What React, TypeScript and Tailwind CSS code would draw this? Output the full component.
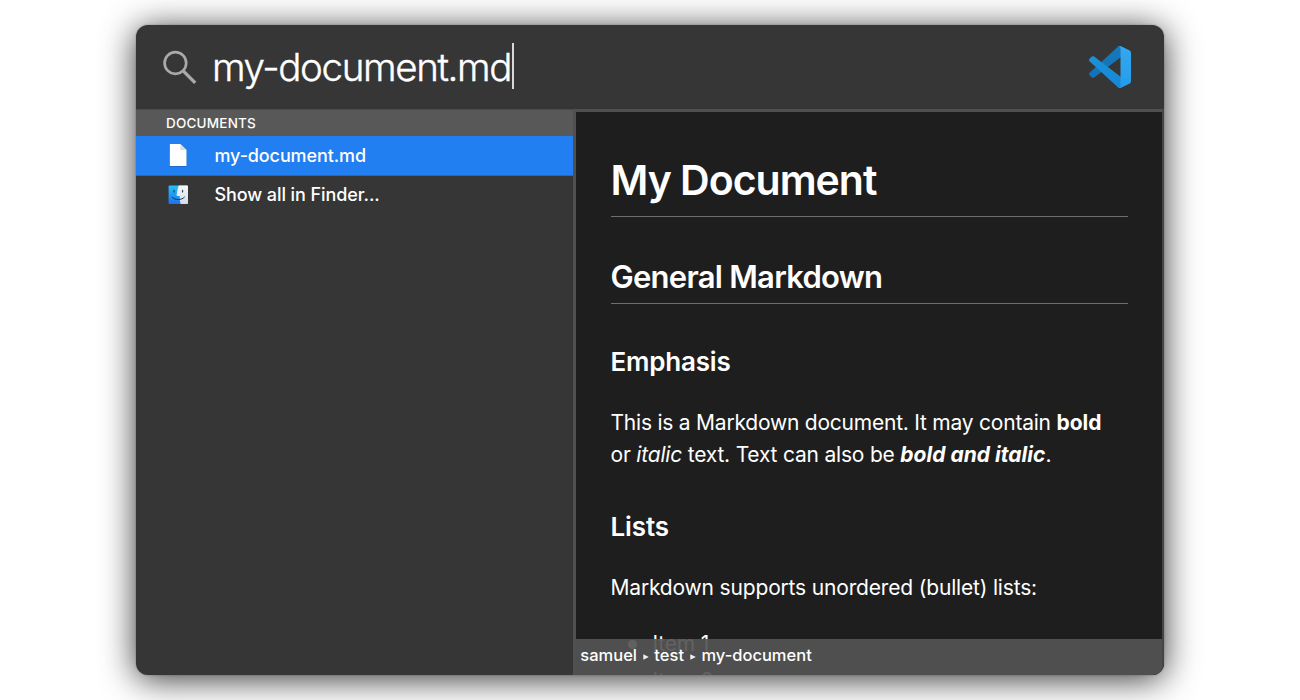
import React from "react";

function SearchIcon() {
  return (
    <svg className="block h-[36px] w-[36px] shrink-0" viewBox="0 0 36 36" fill="none" stroke="#a9a9a9">
      <circle cx="12.4" cy="14" r="10.8" strokeWidth="2.7" />
      <path d="M20.2 21.8 L32.2 33.8" strokeWidth="3.3" />
    </svg>
  );
}

function CodeLogo() {
  return (
    <svg className="block h-[42px] w-[42px] shrink-0" viewBox="0 0 100 100">
      <defs>
        <linearGradient id="armBack" x1="0" y1="1" x2="1" y2="0">
          <stop offset="0" stopColor="#1272b4" />
          <stop offset="1" stopColor="#1779bb" />
        </linearGradient>
        <linearGradient id="armFront" x1="0" y1="0" x2="1" y2="1">
          <stop offset="0" stopColor="#1b93d8" />
          <stop offset="1" stopColor="#1685d6" />
        </linearGradient>
        <linearGradient id="spine" x1="0" y1="0" x2="0" y2="1">
          <stop offset="0" stopColor="#35a8f0" />
          <stop offset="1" stopColor="#259bea" />
        </linearGradient>
      </defs>
      <path fill="url(#armBack)" d="M96.46 10.8L75.86.88C73.47-.27 70.62.21 68.75 2.08L1.3 63.58c-1.82 1.66-1.82 4.51 0 6.16l5.51 5.01c1.49 1.35 3.72 1.45 5.32.24L93.36 13.37C96.09 11.3 100 13.25 100 16.67v-.24c0-2.4-1.38-4.59-3.54-5.63Z" />
      <path fill="url(#armFront)" d="M96.46 89.2l-20.6 9.92c-2.39 1.15-5.24.67-7.11-1.2L1.3 36.42c-1.82-1.66-1.82-4.51 0-6.17l5.51-5c1.49-1.35 3.72-1.45 5.32-.24L93.36 86.63C96.09 88.7 100 86.75 100 83.33v.24c0 2.4-1.38 4.59-3.54 5.63Z" />
      <path fill="url(#spine)" d="M75.86 99.13c-2.39 1.14-5.24.66-7.11-1.21C71.06 100.22 75 98.59 75 95.33V4.67c0-3.26-3.94-4.89-6.25-2.59 1.87-1.87 4.72-2.36 7.11-1.21l20.6 9.91c2.16 1.04 3.54 3.23 3.54 5.63v67.18c0 2.4-1.38 4.59-3.54 5.63l-20.6 9.91Z" />
    </svg>
  );
}

function DocIcon() {
  return (
    <svg className="block h-[24px] w-[20px] -translate-y-px" viewBox="0 0 20 24">
      <path d="M1.4 1.2H12.3L18.8 7.6V23.8H1.4Z" fill="#14539f" opacity=".55" />
      <path d="M1.8 .9H12.3L18.5 7V23.1H1.8Z" fill="#fff" />
      <path d="M12.3 .9V7H18.5Z" fill="#d9dde3" />
    </svg>
  );
}

function FinderIcon() {
  return (
    <svg className="block h-[20px] w-[20px]" viewBox="0 0 20 20">
      <defs>
        <linearGradient id="faceLeft" x1="0" y1="0" x2="0" y2="1">
          <stop offset="0" stopColor="#25c3fb" />
          <stop offset="1" stopColor="#1d72ea" />
        </linearGradient>
        <linearGradient id="faceRight" x1="0" y1="0" x2="0" y2="1">
          <stop offset="0" stopColor="#f7f8fa" />
          <stop offset="1" stopColor="#d5dde8" />
        </linearGradient>
      </defs>
      <rect x=".6" y=".4" width="19.4" height="18.6" rx="1" fill="url(#faceLeft)" />
      <path d="M10.8 .4C9.4 4 8.7 7.4 8.7 11H11.7C11.6 14 12 17 12.6 19H19a1 1 0 0 0 1-1V1.4a1 1 0 0 0-1-1Z" fill="url(#faceRight)" />
      <path d="M6 5.4V7M14.6 5.4V7" stroke="#1c3550" strokeWidth="1.1" strokeLinecap="round" />
      <path d="M4.2 12.2C7.2 15.4 13.4 15.4 16.4 12.2" stroke="#1c3550" strokeWidth="1" fill="none" strokeLinecap="round" />
    </svg>
  );
}

function Arrow() {
  return (
    <svg className="mx-[5.7px] block h-[6px] w-[6px] translate-y-px" viewBox="0 0 6 6">
      <path d="M.3 .2L5.8 3 .3 5.8Z" fill="#f0f0f0" />
    </svg>
  );
}

export default function App() {
  return (
    <div className="flex h-[700px] w-[1300px] justify-center overflow-hidden bg-white pt-[25px] font-['Inter',sans-serif] text-white antialiased">
      <div className="flex h-[650px] w-[1028px] flex-col overflow-hidden rounded-[12px] bg-[#363636] whitespace-nowrap shadow-[0_0_2px_rgba(0,0,0,0.3),0_4px_34px_rgba(0,0,0,0.8)]">
        <header className="flex h-[84px] shrink-0 items-center pr-[33px] pl-[27px]">
          <SearchIcon />
          <span className="ml-[13px] text-[38.5px] leading-[46px] font-[350] tracking-[-1.36px] [-webkit-text-stroke:0.4px_#fff]">my-document.md</span>
          <span className="ml-[1px] h-[46px] w-[2px] -translate-y-[1px] bg-[#d8d8d8]" />
          <span className="ml-auto">
            <CodeLogo />
          </span>
        </header>

        <div className="flex min-h-0 flex-1">
          <aside className="w-[437px] shrink-0">
            <div className="flex h-[27px] items-center border-t border-[#4a4a4a] bg-[#585858] pt-px pl-[30px] text-[13.5px] font-medium tracking-[0.2px]">
              DOCUMENTS
            </div>
            <div className="flex h-[40px] items-center border-b border-[#55606e] bg-[#217ff1] pl-[32px] text-[18px] font-medium tracking-[-0.11px]">
              <DocIcon />
              <span className="ml-[26.5px]">my-document.md</span>
            </div>
            <div className="flex h-[37px] items-center pl-[32px] text-[18px] font-medium tracking-[-0.08px]">
              <FinderIcon />
              <span className="ml-[26.5px]">Show all in Finder...</span>
            </div>
          </aside>

          <main className="relative min-w-0 flex-1 overflow-hidden border-t-[3px] border-r-[2px] border-l-[3px] border-t-[#505050] border-r-[#454545] border-l-[#505050] bg-[#1e1e1e]">
            <article className="w-[552px] pl-[34.5px] text-[21px] leading-[32px] tracking-[-0.17px]">
              <h1 className="mt-[41px] h-[64px] w-[517px] border-b border-[#6e6e6e] text-[41px] leading-[54px] font-semibold tracking-[-1px]">My Document</h1>
              <h2 className="mt-[39px] h-[48px] w-[517px] border-b border-[#6e6e6e] text-[31px] leading-[42px] font-semibold tracking-[-0.73px]">General Markdown</h2>
              <h3 className="mt-[42px] text-[26px] leading-[32px] font-semibold tracking-[-0.2px]">Emphasis</h3>
              <p className="mt-[29px]">
                <span className="tracking-[-0.22px]">This is a Markdown document. It may contain <b className="tracking-[-0.05px]">bold</b></span>
                <br />
                <span className="tracking-[-0.2px]">or <i>italic</i> text. Text can also be <b className="tracking-[0.02px]"><i>bold and italic</i></b>.</span>
              </p>
              <h3 className="mt-[40px] text-[26px] leading-[32px] font-semibold tracking-[-0.1px]">Lists</h3>
              <p className="mt-[29px]">Markdown supports unordered (bullet) lists:</p>
              <ul className="mt-[24px] flex flex-col gap-[5px] pl-[17px]">
                <li className="flex items-center">
                  <span className="mr-[16px] h-[9px] w-[9px] rounded-full bg-white" />
                  Item 1
                </li>
                <li className="flex items-center">
                  <span className="mr-[16px] h-[9px] w-[9px] rounded-full bg-white" />
                  Item 2
                </li>
              </ul>
            </article>
            <footer className="absolute -right-[2px] bottom-0 left-0 flex h-[36px] items-center bg-[#545454]/92 pb-[3px] pl-[4.3px] text-[16.5px] font-medium">
              <span>samuel</span>
              <Arrow />
              <span>test</span>
              <Arrow />
              <span>my-document</span>
            </footer>
          </main>
        </div>
      </div>
    </div>
  );
}
